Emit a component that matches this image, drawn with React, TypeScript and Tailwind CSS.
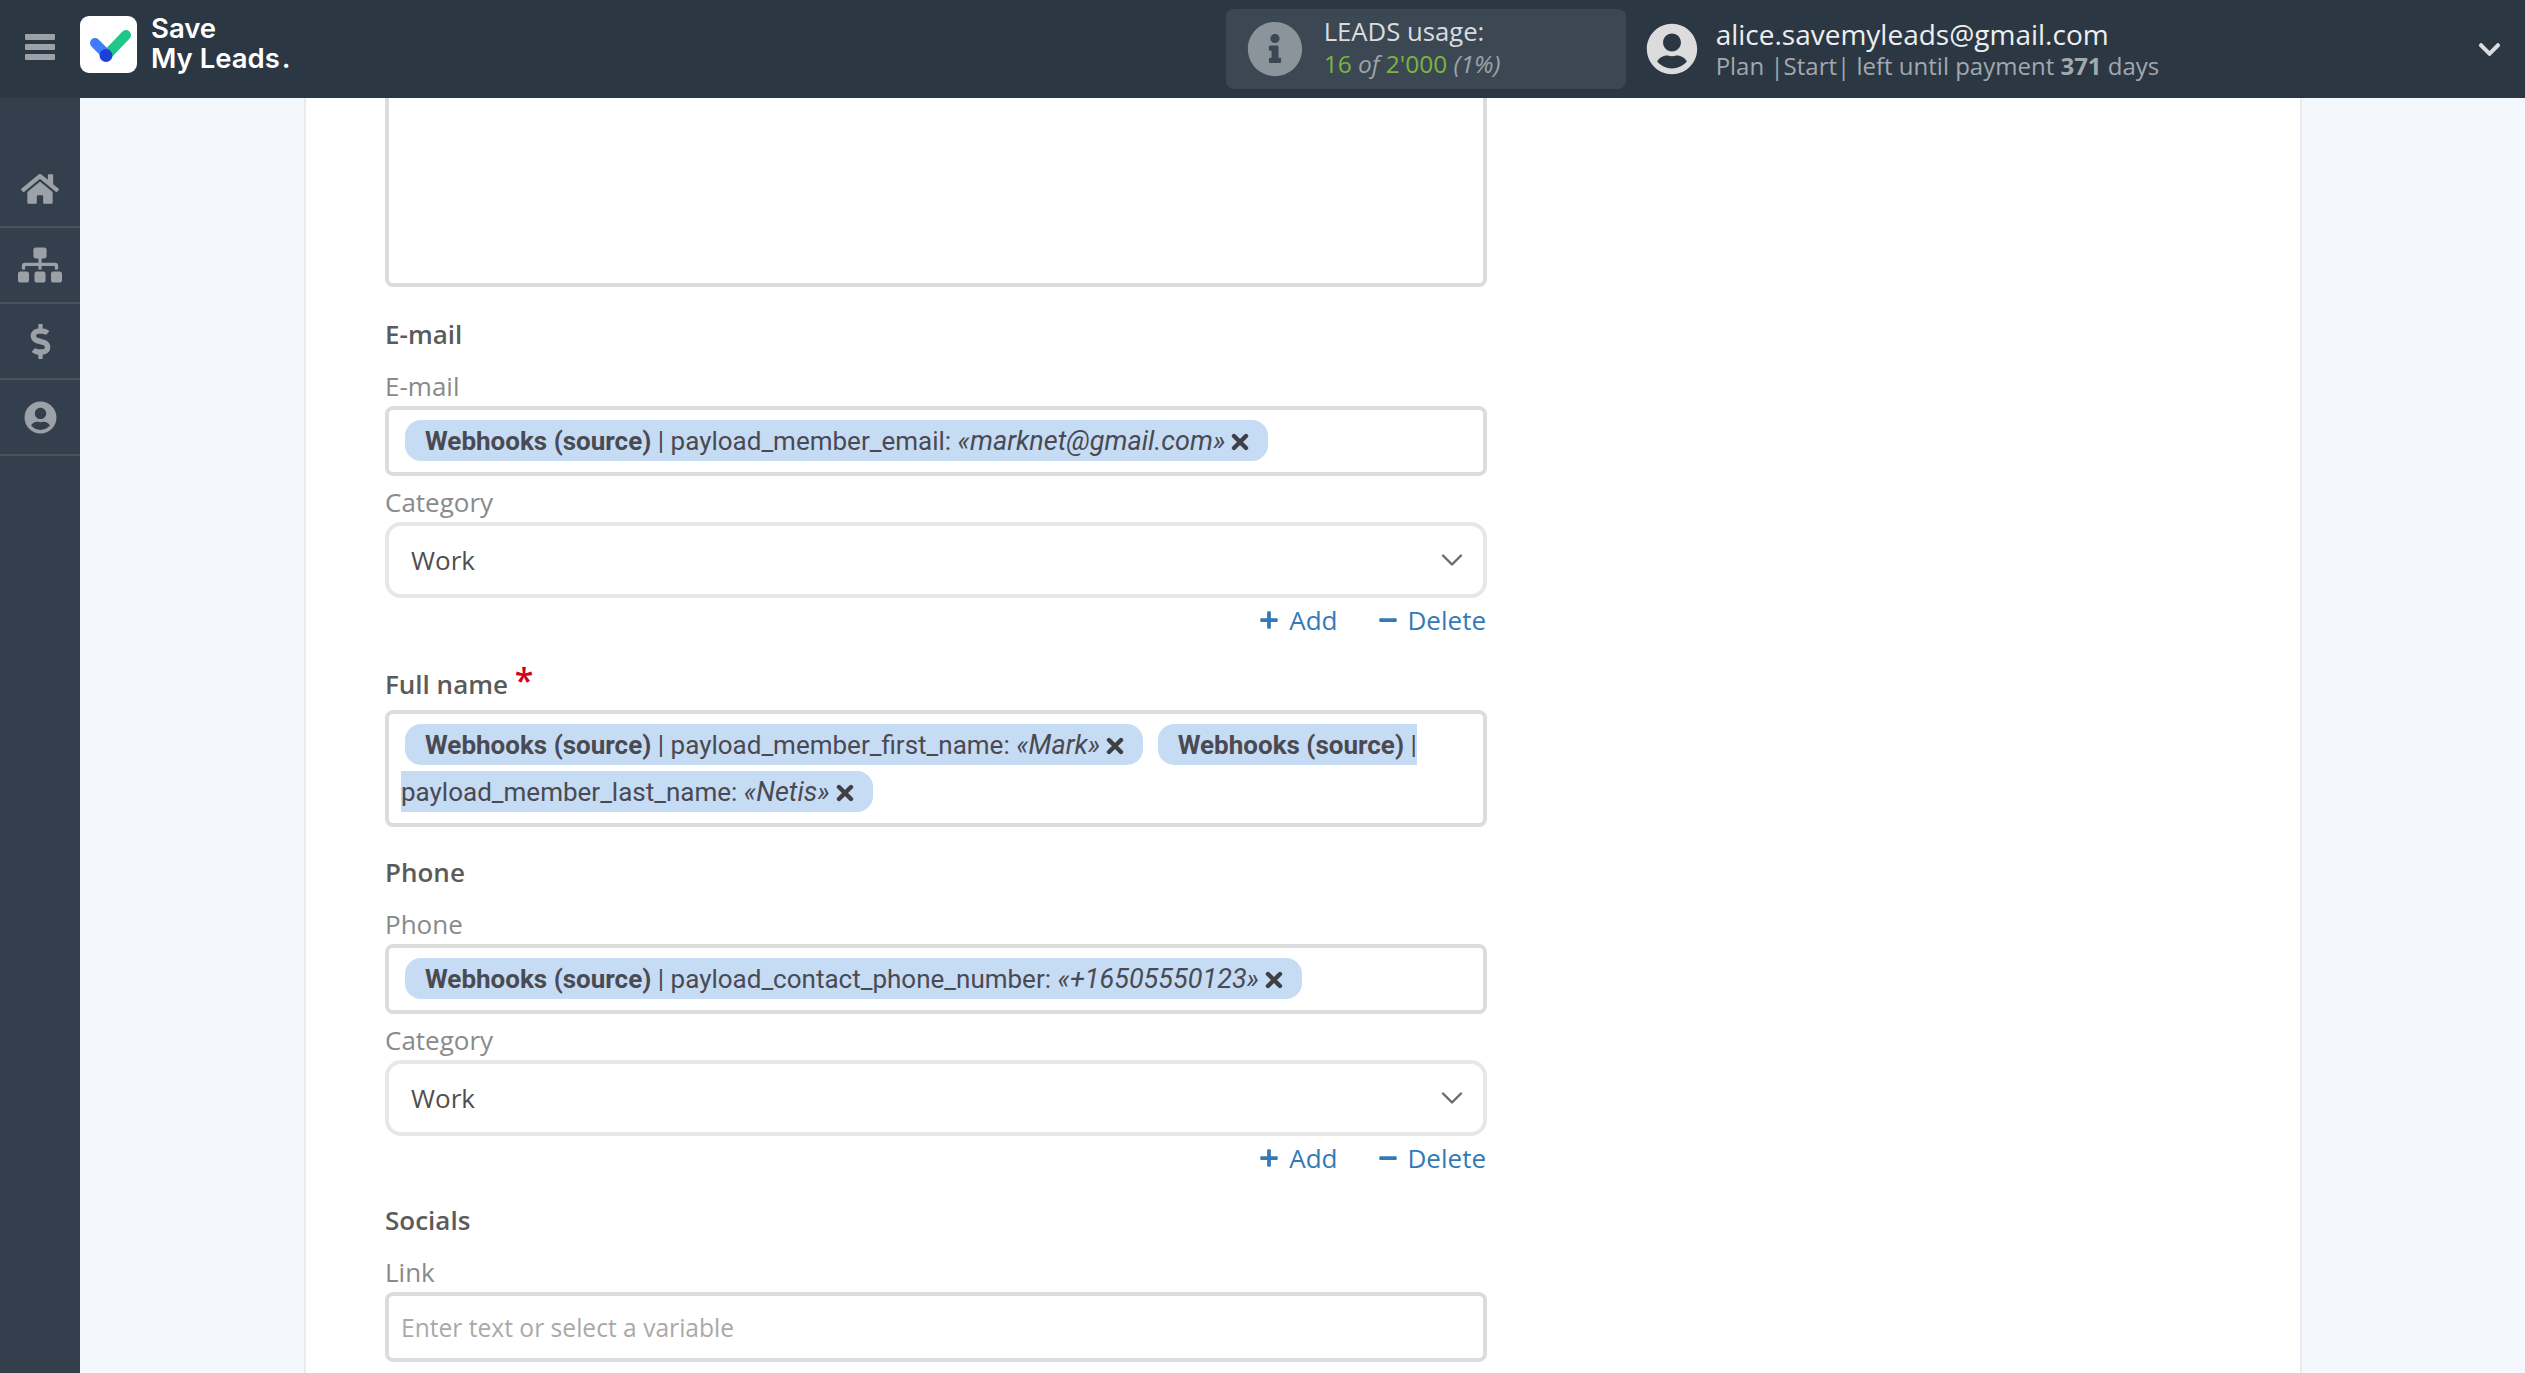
import { ChevronDown } from "lucide-react";
import {
  FaChevronDown,
  FaDollarSign,
  FaHome,
  FaInfoCircle,
  FaMinus,
  FaPlus,
  FaSitemap,
  FaUserCircle,
} from "react-icons/fa";

const Logo = () => (
  <div className="mb-[9px] flex items-center">
    <div className="flex size-[57px] items-center justify-center rounded-[9px] bg-white">
      <svg width="57" height="57" viewBox="0 0 57 57" fill="none">
        <path d="M46 19 L26 40" stroke="#20c78a" strokeWidth="10" strokeLinecap="round" />
        <path d="M15 27 L26 38" stroke="#3f7bfa" strokeWidth="10" strokeLinecap="round" />
        <circle cx="26" cy="39.5" r="6.5" fill="#1c3fd6" />
      </svg>
    </div>
    <div className="ml-[14px] pb-[3px] font-['Inter',sans-serif] text-[27.5px] leading-[30px] font-semibold text-white">
      <div>Save</div>
      <div>
        My Leads<span className="ml-[2px]">.</span>
      </div>
    </div>
  </div>
);

const Header = () => (
  <header className="flex h-[98px] shrink-0 items-center bg-[#2c3744] font-['Open_Sans',sans-serif]">
    <div className="mb-[4px] ml-[25px] flex w-[30px] flex-col gap-[4px]">
      <span className="h-[6px] rounded-[1px] bg-[#9ba1a6]" />
      <span className="h-[6px] rounded-[1px] bg-[#9ba1a6]" />
      <span className="h-[6px] rounded-[1px] bg-[#9ba1a6]" />
    </div>
    <div className="ml-[25px]">
      <Logo />
    </div>

    <div className="ml-[935px] flex h-[80px] w-[400px] items-center rounded-[8px] bg-[#3b4853] pl-[21px]">
      <FaInfoCircle className="size-[56px] text-[#8b949b]" />
      <div className="mb-[3px] ml-[21px] leading-[32px]">
        <div className="text-[25.7px] text-[#d9dcdf]">LEADS usage:</div>
        <div className="text-[24.5px] text-[#9ba3a9] italic">
          <span className="text-[#7cb342] not-italic">16</span> of{" "}
          <span className="text-[#7cb342] not-italic">2'000</span> (1%)
        </div>
      </div>
    </div>

    <FaUserCircle className="ml-[20px] size-[52px] text-[#dcdcdc]" />
    <div className="mb-[2px] ml-[18px]">
      <div className="text-[28px] leading-[36px] text-[#eceef0]">alice.savemyleads@gmail.com</div>
      <div className="text-[24px] leading-[28px] text-[#a2a8ad]">
        Plan |Start| left until payment <b className="font-bold">371</b> days
      </div>
    </div>

    <FaChevronDown className="mr-[23px] ml-auto size-[25px] text-[#dcdcdc]" />
  </header>
);

const Sidebar = () => (
  <aside className="w-[80px] shrink-0 bg-[#333f4d] pt-[54px]">
    <div className="flex h-[76px] items-center justify-center border-b-2 border-[#47525f]">
      <FaHome className="size-[38px] text-[#9ba1a6]" />
    </div>
    <div className="flex h-[76px] items-center justify-center border-b-2 border-[#47525f]">
      <FaSitemap className="size-[44px] text-[#9ba1a6]" />
    </div>
    <div className="flex h-[76px] items-center justify-center border-b-2 border-[#47525f]">
      <FaDollarSign className="size-[35px] text-[#9ba1a6]" />
    </div>
    <div className="flex h-[76px] items-center justify-center border-b-2 border-[#47525f]">
      <FaUserCircle className="size-[33px] text-[#9ba1a6]" />
    </div>
  </aside>
);

const Heading = ({ className, children }: { className?: string; children: React.ReactNode }) => (
  <div className={`h-[36px] text-[26px] leading-[36px] font-semibold text-[#5b5b5b] ${className}`}>{children}</div>
);

const Label = ({ className, children }: { className?: string; children: React.ReactNode }) => (
  <div className={`h-[36px] text-[26px] leading-[36px] text-[#8a8a8a] ${className}`}>{children}</div>
);

const CloseMark = () => (
  <svg className="ml-[6px] inline size-[18px] align-[-2px]" viewBox="0 0 18 18" fill="none">
    <path d="M3 3 L15 15 M15 3 L3 15" stroke="#3f3f46" strokeWidth="4.4" strokeLinecap="round" />
  </svg>
);

const Tag = ({ name, value }: { name: string; value: string }) => (
  <span className="mr-[4px] ml-[4px] rounded-[16px] bg-[#c6dbf4] py-[5.5px] pr-[19px] pl-[20px] text-[#4a4a52]">
    <b className="font-bold">Webhooks (source)</b> | {name}: <i className="text-[27px] leading-none">«{value}»</i>
    <CloseMark />
  </span>
);

const TagBox = ({ className, children }: { className?: string; children: React.ReactNode }) => (
  <div className={`rounded-[8px] border-4 border-[#dcdcdc] pt-[7px] pl-[12px] font-['Roboto',sans-serif] text-[26px] leading-[47px] ${className}`}>
    {children}
  </div>
);

const SelectBox = () => (
  <div className="mt-[2px] flex h-[76px] items-center justify-between rounded-[16px] border-4 border-[#e6e7e8] pr-[13px] pl-[22px] text-[26px] text-[#4f4f4f]">
    Work
    <ChevronDown className="size-[36px] text-[#6b6b6b]" strokeWidth={1.6} />
  </div>
);

const Actions = () => (
  <div className="mt-[4px] flex h-[36px] items-center justify-end gap-[40px] pr-[1px] text-[26px] text-[#337ab7]">
    <span className="flex items-center gap-[10px]">
      <FaPlus className="size-[20px]" /> Add
    </span>
    <span className="flex items-center gap-[10px]">
      <FaMinus className="size-[20px]" /> Delete
    </span>
  </div>
);

const Form = () => (
  <div className="w-[1102px]">
    <div className="h-[189px] rounded-b-[8px] border-x-4 border-b-4 border-[#dcdcdc]" />

    <Heading className="mt-[29px]">E-mail</Heading>
    <Label className="mt-[16px]">E-mail</Label>
    <TagBox className="mt-[2px] h-[70px]">
      <Tag name="payload_member_email" value="marknet@gmail.com" />
    </TagBox>
    <Label className="mt-[8px]">Category</Label>
    <SelectBox />
    <Actions />

    <Heading className="mt-[28px]">
      Full name <span className="align-[1.5px] text-[34px] leading-[0] text-[#d0021b]">*</span>
    </Heading>
    <TagBox className="mt-[8px] h-[117px]">
      <Tag name="payload_member_first_name" value="Mark" />{" "}
      <Tag name="payload_member_last_name" value="Netis" />
    </TagBox>

    <Heading className="mt-[27px]">Phone</Heading>
    <Label className="mt-[16px]">Phone</Label>
    <TagBox className="mt-[2px] h-[70px]">
      <Tag name="payload_contact_phone_number" value="+16505550123" />
    </TagBox>
    <Label className="mt-[8px]">Category</Label>
    <SelectBox />
    <Actions />

    <Heading className="mt-[26px]">Socials</Heading>
    <Label className="mt-[16px]">Link</Label>
    <input
      className="mt-[2px] block h-[70px] w-full rounded-[8px] border-4 border-[#dcdcdc] pl-[12px] text-[24.6px] outline-none placeholder:text-[#a9a9a9]"
      placeholder="Enter text or select a variable"
      readOnly
    />
  </div>
);

export default function App() {
  return (
    <div className="flex h-[1373px] w-[2525px] flex-col overflow-hidden font-['Open_Sans',sans-serif]">
      <Header />
      <div className="flex min-h-0 flex-1">
        <Sidebar />
        <main className="min-w-0 flex-1 bg-[#f4f8fc] pr-[223px] pl-[224px]">
          <div className="h-full border-x-2 border-[#e9ebee] bg-white pl-[79px]">
            <Form />
          </div>
        </main>
      </div>
    </div>
  );
}
